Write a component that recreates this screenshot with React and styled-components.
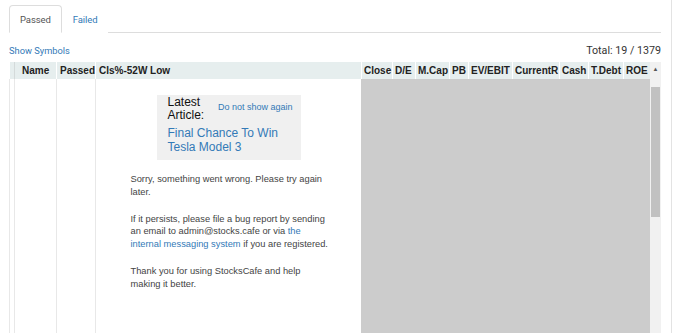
import React from "react";
import styled, { createGlobalStyle } from "styled-components";

const GlobalStyle = createGlobalStyle`
  body {
    margin: 0;
    background: #fff;
    font-family: Roboto, "Liberation Sans", sans-serif;
    overflow: hidden;
  }
`;

const Page = styled.div`
  width: 652px;
  height: 333px;
  padding: 0 10px 0 9px;
  border-right: 1px solid #e3e3e3;
  overflow: hidden;
`;

const Tabs = styled.div`
  display: flex;
  margin-top: 5px;
  border-bottom: 1px solid #ddd;
  height: 27px;
`;

const Tab = styled.div`
  height: 28px;
  box-sizing: border-box;
  padding: 0 10px;
  display: flex;
  align-items: center;
  font-size: 9.5px;
  letter-spacing: -0.1px;
  color: ${({ active }) => (active ? "#555" : "#337ab7")};
  background: #fff;
  border: 1px solid ${({ active }) => (active ? "#ddd" : "transparent")};
  border-bottom-color: ${({ active }) => (active ? "#fff" : "transparent")};
  border-radius: 4px 4px 0 0;
`;

const InfoBar = styled.div`
  display: flex;
  justify-content: space-between;
  align-items: flex-end;
  height: 29px;
  padding-bottom: 4px;
  box-sizing: border-box;
`;

const LinkText = styled.span`
  font-size: 9.3px;
  color: #337ab7;
  line-height: 14px;
`;

const Total = styled.span`
  font-size: 10.7px;
  color: #333;
  line-height: 14px;
`;

const Table = styled.div`
  display: flex;
  height: 272px;
  font-family: "Liberation Sans", Arial, sans-serif;
`;

const Main = styled.div`
  display: flex;
  flex-direction: column;
  flex: 1;
`;

const HeaderRow = styled.div`
  display: flex;
  height: 17px;
  background: #e6eeee;
`;

const HeadCell = styled.div`
  width: ${({ w }) => w}px;
  box-sizing: border-box;
  border-left: 1px solid ${({ dark }) => (dark ? "#d4dada" : "#fff")};
  font-size: 10px;
  font-weight: bold;
  color: #222;
  line-height: 17px;
  padding-left: ${({ pad }) => pad ?? 2}px;
  white-space: nowrap;
  overflow: hidden;
`;

const BodyRow = styled.div`
  display: flex;
  flex: 1;
`;

const BodyCell = styled.div`
  width: ${({ w }) => w}px;
  box-sizing: border-box;
  border-left: 1px solid #e8e8e8;
  background: #fff;
`;

const MessageCell = styled.div`
  width: 266px;
  box-sizing: border-box;
  border-left: 1px solid #e8e8e8;
  background: #fff;
  display: flex;
  flex-direction: column;
  align-items: center;
  padding-top: 16px;
`;

const Loading = styled.div`
  flex: 1;
  background: #cccccc;
`;

const Article = styled.div`
  width: 144px;
  box-sizing: border-box;
  background: #f0f0f0;
  padding: 0 8px 6px 11px;
  font-size: 12px;
  line-height: 13px;
  color: #111;
`;

const ArticleTop = styled.div`
  display: flex;
  gap: 10px;
  padding-top: 1px;
`;

const Dismiss = styled.span`
  font-size: 9px;
  line-height: 12px;
  color: #337ab7;
  margin-top: 5px;
  white-space: nowrap;
`;

const ArticleLink = styled.div`
  color: #337ab7;
  margin-top: 4px;
  line-height: 14px;
`;

const Message = styled.div`
  width: 198px;
  margin-top: 13px;
  margin-left: 2px;
  font-size: 9.3px;
  line-height: 12.8px;
  color: #444;
  p {
    margin: 0 0 14px;
  }
  a {
    color: #337ab7;
    text-decoration: none;
  }
`;

const Scrollbar = styled.div`
  width: 11px;
  background: #f1f1f1;
  display: flex;
  flex-direction: column;
  align-items: center;
`;

const Arrow = styled.div`
  height: 25px;
  font-size: 6px;
  color: #555;
  padding-top: 4px;
  box-sizing: border-box;
`;

const Thumb = styled.div`
  width: 9px;
  height: 130px;
  background: #c1c1c1;
`;

const rightCols = [
  ["Close", 31],
  ["D/E", 23],
  ["M.Cap", 34],
  ["PB", 19],
  ["EV/EBIT", 44],
  ["CurrentR", 47],
  ["Cash", 29],
  ["T.Debt", 35],
  ["ROE", 27],
];

export default function App() {
  return (
    <>
      <GlobalStyle />
      <Page>
        <Tabs>
          <Tab active>Passed</Tab>
          <Tab>Failed</Tab>
        </Tabs>
        <InfoBar>
          <LinkText>Show Symbols</LinkText>
          <Total>Total: 19 / 1379</Total>
        </InfoBar>
        <Table>
          <Main>
            <HeaderRow>
              <HeadCell w={5} pad={0} />
              <HeadCell w={42} dark pad={7}>Name</HeadCell>
              <HeadCell w={39} pad={3}>Passed</HeadCell>
              <HeadCell w={266} pad={3}>Cls%-52W Low</HeadCell>
              {rightCols.map(([label, w]) => (
                <HeadCell key={label} w={w}>
                  {label}
                </HeadCell>
              ))}
            </HeaderRow>
            <BodyRow>
              <BodyCell w={5} />
              <BodyCell w={42} />
              <BodyCell w={39} />
              <MessageCell>
                <Article>
                  <ArticleTop>
                    <span>Latest Article:</span>
                    <Dismiss>Do not show again</Dismiss>
                  </ArticleTop>
                  <ArticleLink>Final Chance To Win Tesla Model 3</ArticleLink>
                </Article>
                <Message>
                  <p>Sorry, something went wrong. Please try again later.</p>
                  <p>
                    If it persists, please file a bug report by sending an email
                    to admin@stocks.cafe or via <a>the internal messaging system</a>{" "}
                    if you are registered.
                  </p>
                  <p>Thank you for using StocksCafe and help making it better.</p>
                </Message>
              </MessageCell>
              <Loading />
            </BodyRow>
          </Main>
          <Scrollbar>
            <Arrow>▲</Arrow>
            <Thumb />
          </Scrollbar>
        </Table>
      </Page>
    </>
  );
}
